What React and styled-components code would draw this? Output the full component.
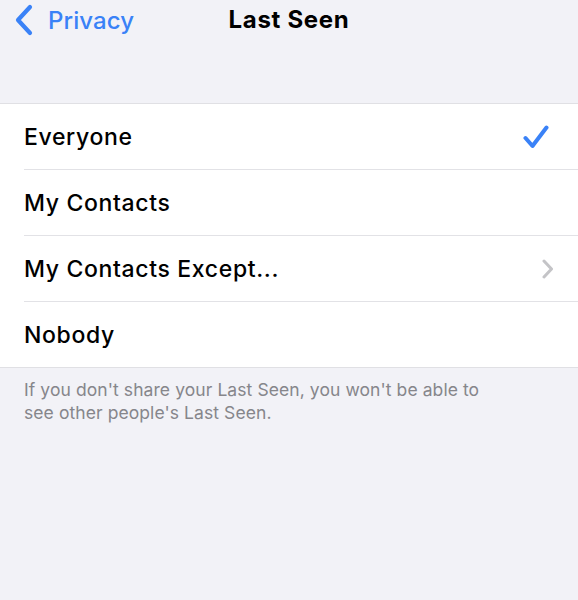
import React from "react";
import styled, { createGlobalStyle } from "styled-components";

const Global = createGlobalStyle`
  html, body { margin: 0; padding: 0; background: #f2f2f7; }
  body { font-family: Inter, "Noto Sans", sans-serif; -webkit-font-smoothing: antialiased; }
`;

const Page = styled.div`
  width: 578px;
  min-height: 600px;
  background: #f2f2f7;
`;

const NavBar = styled.div`
  position: relative;
  height: 40px;
  display: flex;
  align-items: center;
  justify-content: center;
`;

const BackButton = styled.div`
  position: absolute;
  left: 13px;
  top: 4px;
  display: flex;
  align-items: center;
  gap: 13px;
  color: #3a82f7;
  font-size: 24px;
  font-weight: 500;
  letter-spacing: 0.1px;
`;

const Title = styled.div`
  font-size: 24px;
  font-weight: 700;
  color: #000;
  margin-top: -2px;
  letter-spacing: 0.7px;
`;

const Group = styled.div`
  margin-top: 63px;
  background: #fff;
  border-top: 1px solid #e0e0e4;
  border-bottom: 1px solid #e0e0e4;
`;

const Row = styled.div`
  margin-left: 24px;
  padding-right: 29px;
  display: flex;
  align-items: center;
  justify-content: space-between;
  border-top: ${(p) => (p.$first ? "none" : "1px solid #e2e2e6")};
  box-sizing: border-box;
  height: ${(p) => (p.$first ? "65px" : "66px")};
`;

const Label = styled.span`
  font-size: 23px;
  font-weight: 500;
  color: #000;
  letter-spacing: 0.65px;
`;

const Footer = styled.p`
  margin: 0;
  padding: 10px 80px 0 24px;
  font-size: 17.5px;
  line-height: 23px;
  color: #86868b;
  letter-spacing: 0.08px;
`;

const ChevronIcon = styled.svg`
  margin-right: -6px;
`;

const Check = () => (
  <svg width="26" height="24" viewBox="0 0 26 24">
    <path d="M2.5 13 L9.5 21 L23.5 2.5" fill="none" stroke="#3a82f7" strokeWidth="4" strokeLinecap="round" strokeLinejoin="round" />
  </svg>
);

const Chevron = () => (
  <ChevronIcon width="14" height="20" viewBox="0 0 14 20">
    <path d="M3 2 L10.5 10 L3 18" fill="none" stroke="#c4c4c7" strokeWidth="3" strokeLinecap="round" strokeLinejoin="round" />
  </ChevronIcon>
);

const BackChevron = () => (
  <svg width="22" height="32" viewBox="0 0 22 32">
    <path d="M17 3 L5 16 L17 29" fill="none" stroke="#3a82f7" strokeWidth="4.2" strokeLinecap="round" strokeLinejoin="round" />
  </svg>
);

const options = [
  { label: "Everyone", accessory: "check" },
  { label: "My Contacts" },
  { label: "My Contacts Except...", accessory: "chevron" },
  { label: "Nobody" },
];

export default function App() {
  return (
    <Page>
      <Global />
      <NavBar>
        <BackButton>
          <BackChevron />
          <span>Privacy</span>
        </BackButton>
        <Title>Last Seen</Title>
      </NavBar>
      <Group>
        {options.map((o, i) => (
          <Row key={o.label} $first={i === 0}>
            <Label>{o.label}</Label>
            {o.accessory === "check" && <Check />}
            {o.accessory === "chevron" && <Chevron />}
          </Row>
        ))}
      </Group>
      <Footer>
        If you don't share your Last Seen, you won't be able to see other people's Last Seen.
      </Footer>
    </Page>
  );
}
